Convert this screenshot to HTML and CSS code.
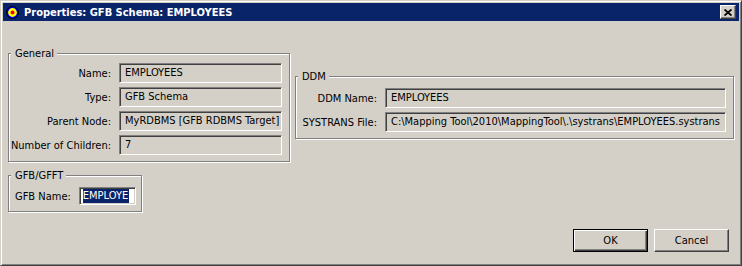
FILE: index.html
```html
<!DOCTYPE html>
<html lang="en">
<head>
    <meta charset="UTF-8">
    <meta name="viewport" content="width=device-width, initial-scale=1.0">
    <title>Properties: GFB Schema: EMPLOYEES</title>
    <link rel="stylesheet" href="styles.css">
</head>
<body>
    <div class="window">
        <div class="titlebar">
            <svg class="app-icon" width="13" height="13" viewBox="0 0 13 13">
                <circle cx="6.5" cy="6.5" r="6" fill="#0000ff" stroke="#000" stroke-width="1"/>
                <circle cx="6.5" cy="6.5" r="4.4" fill="#ffff00"/>
                <circle cx="6.5" cy="6.5" r="2" fill="#ff0000"/>
            </svg>
            <span class="title">Properties: GFB Schema: EMPLOYEES</span>
            <button class="close-btn" aria-label="Close">
                <svg width="8" height="7" viewBox="0 0 8 7">
                    <path d="M0.5 0.5 L7.5 6.5 M7.5 0.5 L0.5 6.5" stroke="#000" stroke-width="1.8" fill="none"/>
                </svg>
            </button>
        </div>

        <div class="dialog-body">
            <div class="top-row">
                <div class="group group-general">
                    <div class="legend">General</div>
                    <div class="form-grid">
                        <label>Name:</label>
                        <div class="field">EMPLOYEES</div>
                        <label>Type:</label>
                        <div class="field">GFB Schema</div>
                        <label>Parent Node:</label>
                        <div class="field">MyRDBMS [GFB RDBMS Target]</div>
                        <label>Number of Children:</label>
                        <div class="field">7</div>
                    </div>
                </div>

                <div class="group group-ddm">
                    <div class="legend">DDM</div>
                    <div class="form-grid">
                        <label>DDM Name:</label>
                        <div class="field">EMPLOYEES</div>
                        <label>SYSTRANS File:</label>
                        <div class="field">C:\Mapping Tool\2010\MappingTool\.\systrans\EMPLOYEES.systrans</div>
                    </div>
                </div>
            </div>

            <div class="group group-gfb">
                <div class="legend">GFB/GFFT</div>
                <div class="form-grid">
                    <label>GFB Name:</label>
                    <div class="field field-edit"><span class="selected">EMPLOYE</span></div>
                </div>
            </div>

            <div class="button-row">
                <button class="btn btn-default">OK</button>
                <button class="btn">Cancel</button>
            </div>
        </div>
    </div>
</body>
</html>
```

FILE: styles.css
```css
* {
    box-sizing: border-box;
}

body {
    margin: 0;
    font-family: 'DejaVu Sans Condensed', 'Liberation Sans', sans-serif;
    font-stretch: condensed;
    font-size: 11px;
    color: #000;
    background: #d4d0c8;
}

.window {
    width: 742px;
    height: 266px;
    background: #d4d0c8;
    border: 1px solid;
    border-color: #d4d0c8 #404040 #404040 #d4d0c8;
    box-shadow: inset 1px 1px #fff, inset -1px -1px #808080;
    padding: 2px;
}

.titlebar {
    height: 18px;
    margin-bottom: 1px;
    background: #0a246a;
    display: flex;
    align-items: center;
    padding-left: 3px;
    padding-right: 3px;
}

.app-icon {
    display: block;
    flex: none;
    margin-right: 5px;
}

.title {
    color: #fff;
    font-weight: bold;
    flex: 1;
}

.close-btn {
    flex: none;
    width: 16px;
    height: 14px;
    padding: 0;
    background: #d4d0c8;
    border: 1px solid;
    border-color: #fff #404040 #404040 #fff;
    box-shadow: inset -1px -1px #808080;
    display: flex;
    align-items: center;
    justify-content: center;
}

.close-btn svg {
    display: block;
}

.dialog-body {
    padding: 31px 0 0 5px;
}

.top-row {
    display: flex;
    align-items: flex-start;
    gap: 5px;
}

.group {
    position: relative;
    flex: none;
    border: 1px solid #808080;
    box-shadow: inset 1px 1px #fff, 1px 1px #fff;
    padding-right: 7px;
    padding-bottom: 6px;
}

.legend {
    position: absolute;
    top: -7px;
    left: 2px;
    padding: 0 3px 0 4px;
    background: #d4d0c8;
    line-height: 13px;
}

.form-grid {
    display: grid;
    column-gap: 8px;
    row-gap: 4px;
    align-items: center;
}

.form-grid label {
    text-align: right;
    white-space: nowrap;
}

.field {
    height: 20px;
    line-height: 18px;
    padding: 0 3px 0 5px;
    border: 1px solid;
    border-color: #808080 #fff #fff #808080;
    box-shadow: inset 1px 1px #404040, inset -1px -1px #d4d0c8;
    background: #d4d0c8;
    white-space: nowrap;
    overflow: hidden;
}

.group-general {
    width: 282px;
    padding-top: 9px;
}

.group-general .form-grid {
    grid-template-columns: 1fr 163px;
}

.group-ddm {
    width: 439px;
    margin-top: 23px;
    padding-top: 11px;
}

.group-ddm .form-grid {
    grid-template-columns: 1fr 341px;
}

.group-gfb {
    width: 134px;
    margin-top: 13px;
    padding-top: 11px;
    padding-left: 6px;
}

.group-gfb .form-grid {
    grid-template-columns: 1fr 57px;
}

.field-edit {
    height: 18px;
    line-height: 14px;
    background: #fff;
    box-shadow: inset 1px 1px #404040, inset -1px -1px #d4d0c8;
    padding: 1px 0 0 3px;
}

.selected {
    display: inline-block;
    background: #0a246a;
    color: #fff;
    padding-right: 1px;
}

.button-row {
    display: flex;
    justify-content: flex-end;
    gap: 6px;
    margin-top: 17px;
    padding-right: 10px;
}

.btn {
    width: 75px;
    height: 23px;
    padding: 0;
    font-family: inherit;
    font-stretch: inherit;
    font-size: 11px;
    color: #000;
    background: #d4d0c8;
    border: 1px solid;
    border-color: #fff #404040 #404040 #fff;
    box-shadow: inset -1px -1px #808080;
}

.btn-default {
    border: 1px solid #000;
    box-shadow: inset 1px 1px #fff, inset -1px -1px #404040, inset -2px -2px #808080;
}
```
